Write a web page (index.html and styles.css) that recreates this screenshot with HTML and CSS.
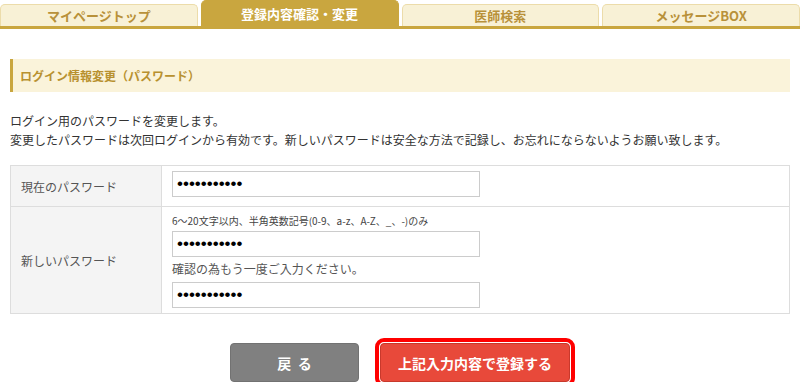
FILE: index.html
```html
<!doctype html>
<html>

<head>
<meta charset="utf-8">
<title>登録内容確認・変更</title>

<link rel="stylesheet" href="styles.css">
</head>

<body>

<div class="tabs">
	<div class="tab">マイページトップ</div>
	<div class="tab active">登録内容確認・変更</div>
	<div class="tab">医師検索</div>
	<div class="tab">メッセージBOX</div>
</div>

<div class="main">
	<h2 class="sectionTitle">ログイン情報変更（パスワード）</h2>

	<p class="intro">ログイン用のパスワードを変更します。<br>
	変更したパスワードは次回ログインから有効です。新しいパスワードは安全な方法で記録し、お忘れにならないようお願い致します。</p>

	<table class="formTable">
		<tr class="row1">
			<th>現在のパスワード</th>
			<td><input type="password" class="pwInput" value="aaaaaaaaaaa"></td>
		</tr>
		<tr class="row2">
			<th>新しいパスワード</th>
			<td>
				<div class="note">6～20文字以内、半角英数記号(0-9、a-z、A-Z、_、-)のみ</div>
				<input type="password" class="pwInput" value="aaaaaaaaaaa">
				<div class="confirm">確認の為もう一度ご入力ください。</div>
				<input type="password" class="pwInput" value="aaaaaaaaaaa">
			</td>
		</tr>
	</table>

	<div class="buttons">
		<button class="btn back">戻&nbsp;&nbsp;る</button>
		<button class="btn submit">上記入力内容で登録する</button>
	</div>
</div>

</body>

</html>
```

FILE: styles.css
```css
html,body {
	margin:0;
	font-family:"Noto Sans CJK JP","Noto Sans",sans-serif;
	font-size:12px;
	background-color:#fff;
	color:#333;
}
.tabs {
	display:flex;
	align-items:flex-end;
	gap:3px;
	height:26px;
	border-bottom:3px solid #c9a63f;
}
.tab {
	flex:1;
	height:22px;
	line-height:22px;
	box-sizing:border-box;
	background-color:#f8f1d6;
	border:1px solid #ecdcaa;
	border-bottom:none;
	border-radius:5px 5px 0 0;
	text-align:center;
	font-size:13px;
	font-weight:bold;
	color:#b8913a;
}
.tab.active {
	height:26px;
	line-height:26px;
	background-color:#c9a63f;
	border-color:#c9a63f;
	color:#fff;
}
.main {
	padding:0 10px;
}
.sectionTitle {
	margin:30px 0 0;
	height:33px;
	line-height:33px;
	padding-left:7px;
	border-left:3px solid #c9a63f;
	background-color:#faf3da;
	font-size:12px;
	font-weight:bold;
	color:#b8912f;
}
.intro {
	margin:19px 0 0;
	line-height:19px;
}
.formTable {
	margin-top:16px;
	width:100%;
	border-collapse:collapse;
}
.formTable th,
.formTable td {
	border:1px solid #ddd;
}
.formTable th {
	width:130px;
	padding:0 10px;
	background-color:#f4f4f4;
	text-align:left;
	font-weight:normal;
	color:#555;
}
.formTable td {
	padding:5px 10px 9px;
}
.row2 td {
	padding:3px 10px 5px;
}
.pwInput {
	display:block;
	box-sizing:border-box;
	width:308px;
	height:26px;
	margin:0;
	padding:0 4px;
	border:1px solid #ccc;
	font-size:17px;
	font-family:"Liberation Sans",sans-serif;
	color:#000;
}
.note {
	height:21px;
	line-height:21px;
	font-size:10px;
	color:#444;
}
.confirm {
	height:25px;
	line-height:24px;
	color:#555;
}
.buttons {
	display:flex;
	justify-content:center;
	gap:21px;
	margin-top:29px;
}
.btn {
	height:39px;
	border-radius:4px;
	font-family:"Noto Sans CJK JP",sans-serif;
	font-size:14px;
	font-weight:bold;
	color:#fff;
	cursor:pointer;
}
.back {
	width:129px;
	background-color:#808080;
	border:1px solid #727272;
}
.submit {
	width:190px;
	background-color:#e8493a;
	border:1px solid #c8392c;
	outline:4px solid #f00;
	outline-offset:1px;
}
```
